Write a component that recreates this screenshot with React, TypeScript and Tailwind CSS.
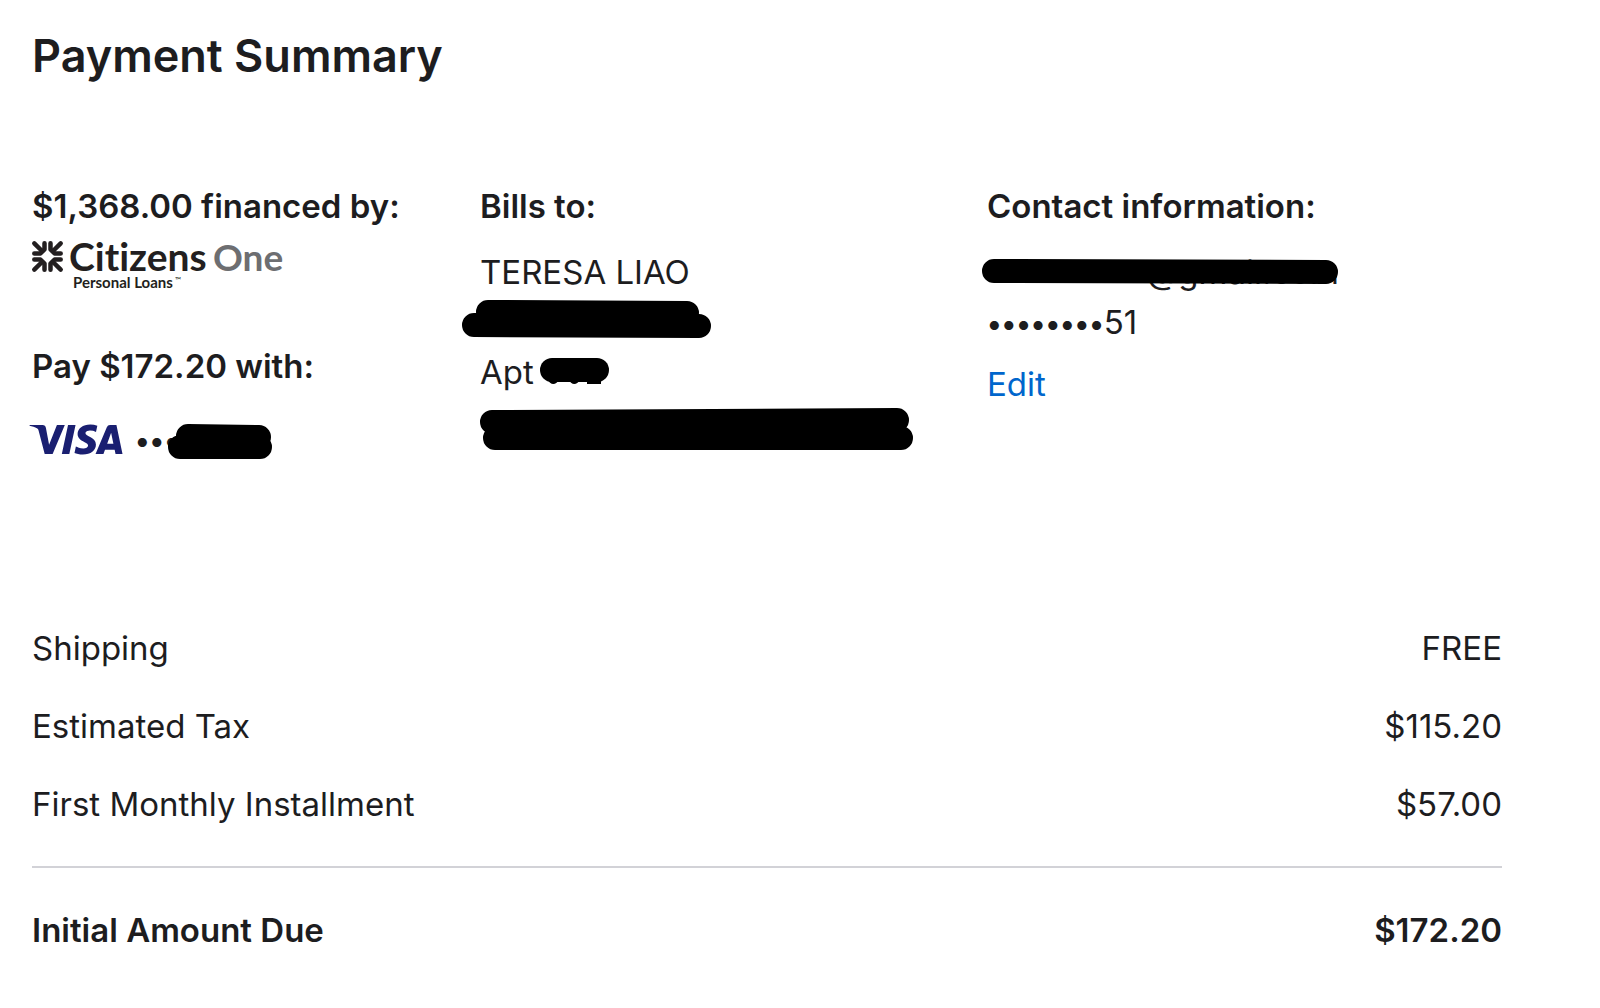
import React from 'react';
import { SiVisa } from 'react-icons/si';

const charges = [
    { label: 'Shipping', amount: 'FREE' },
    { label: 'Estimated Tax', amount: '$115.20' },
    { label: 'First Monthly Installment', amount: '$57.00' },
];

interface MarkerProps {
    d: string;
}

// Black marker strokes laid over private details
const Marker: React.FC<MarkerProps> = ({ d }) => (
    <svg
        className="absolute left-0 top-0 overflow-visible"
        fill="none"
        stroke="#000"
        strokeWidth="24"
        strokeLinecap="round"
        aria-hidden="true"
    >
        <path d={d} />
    </svg>
);

const Dots: React.FC<{ children: string }> = ({ children }) => (
    <span className="pt-0.5 text-[29px] leading-none font-semibold">{children}</span>
);

const Petal: React.FC<{ turn: number }> = ({ turn }) => (
    <g transform={`rotate(${turn} 15.5 15.5)`}>
        <path d="M2.3 2.3 L9.5 9.5" />
        <path d="M2.3 12.5 H8.4 L12.5 8.4 V2.3" />
    </g>
);

const CitizensLogo = () => (
    <svg
        width="254"
        height="50"
        viewBox="0 0 254 50"
        className="overflow-visible font-['Lato',sans-serif] [font-variant-ligatures:none]"
        role="img"
        aria-label="Citizens One Personal Loans"
    >
        <g stroke="#231f20" strokeWidth="4.5" strokeLinecap="round" strokeLinejoin="round" fill="none">
            <Petal turn={0} />
            <Petal turn={90} />
            <Petal turn={180} />
            <Petal turn={270} />
        </g>
        <text x="37" y="30" fontWeight="700" fontSize="39" fill="#231f20">Citizens</text>
        <text x="181" y="30" fontWeight="700" fontSize="37" fill="#6d6e71">One</text>
        <text x="41" y="47" fontWeight="700" fontSize="15" fill="#231f20">Personal Loans</text>
        <text x="143" y="42" fontSize="8" fill="#231f20">™</text>
    </svg>
);

const App = () => {
    return (
        <main className="pl-8 pr-[98px] pt-6 pb-10 bg-white text-[#1d1d1f] text-[33px] leading-[50px] font-['Inter',sans-serif]">
            <h1 className="text-[45px] leading-[64px] font-semibold">Payment Summary</h1>

            <section className="mt-[93px] grid grid-cols-[448fr_507fr_515fr] whitespace-nowrap">
                <div>
                    <h2 className="font-semibold">$1,368.00 financed by:</h2>
                    <div className="mt-[10px] h-[50px]">
                        <CitizensLogo />
                    </div>
                    <h2 className="mt-[50px] font-semibold">Pay $172.20 with:</h2>
                    <div className="mt-[23px] flex items-center gap-3">
                        <SiVisa viewBox="0 8 24 8" className="-ml-[3px] w-[94px] h-[31px] text-[#1a1f71]" title="Visa" />
                        <span className="relative flex h-[50px] items-center">
                            <Dots>•••</Dots>
                            <Marker d="M53 22 L124 23 M45 33 L125 33" />
                        </span>
                    </div>
                </div>

                <div>
                    <h2 className="font-semibold">Bills to:</h2>
                    <address className="mt-4 not-italic">
                        <p>TERESA LIAO</p>
                        <p className="relative h-[50px]">
                            <Marker d="M8 15 L207 16 M-6 28 L219 29" />
                        </p>
                        <p className="relative">
                            Apt
                            <Marker d="M72 23 L117 23" />
                            <svg className="absolute left-16 top-8" width="60" height="6" aria-hidden="true">
                                <path d="M3 0 Q9 10 16 0 Z M24 0 Q30 10 37 0 Z M43 0 H57 V5 H43 Z" />
                            </svg>
                        </p>
                        <p className="relative h-[50px]">
                            <Marker d="M12 25 L417 23 M15 41 L421 41" />
                        </p>
                    </address>
                </div>

                <div>
                    <h2 className="font-semibold">Contact information:</h2>
                    <div className="mt-4">
                        <p className="relative w-[352px] text-right">
                            @gmail.com
                            <Marker d="M7 24 L339 25" />
                        </p>
                        <p className="flex items-center">
                            <Dots>••••••••</Dots>
                            51
                        </p>
                        <a href="#edit" className="mt-3 inline-block text-[#0066cc]">Edit</a>
                    </div>
                </div>
            </section>

            <dl className="mt-[159px]">
                <div className="flex flex-col gap-7 pb-[37px] border-b-2 border-[#d2d2d7]">
                    {charges.map((charge) => (
                        <div key={charge.label} className="flex justify-between">
                            <dt>{charge.label}</dt>
                            <dd>{charge.amount}</dd>
                        </div>
                    ))}
                </div>
                <div className="mt-[37px] flex justify-between font-semibold">
                    <dt>Initial Amount Due</dt>
                    <dd>$172.20</dd>
                </div>
            </dl>
        </main>
    );
};

export default App;
